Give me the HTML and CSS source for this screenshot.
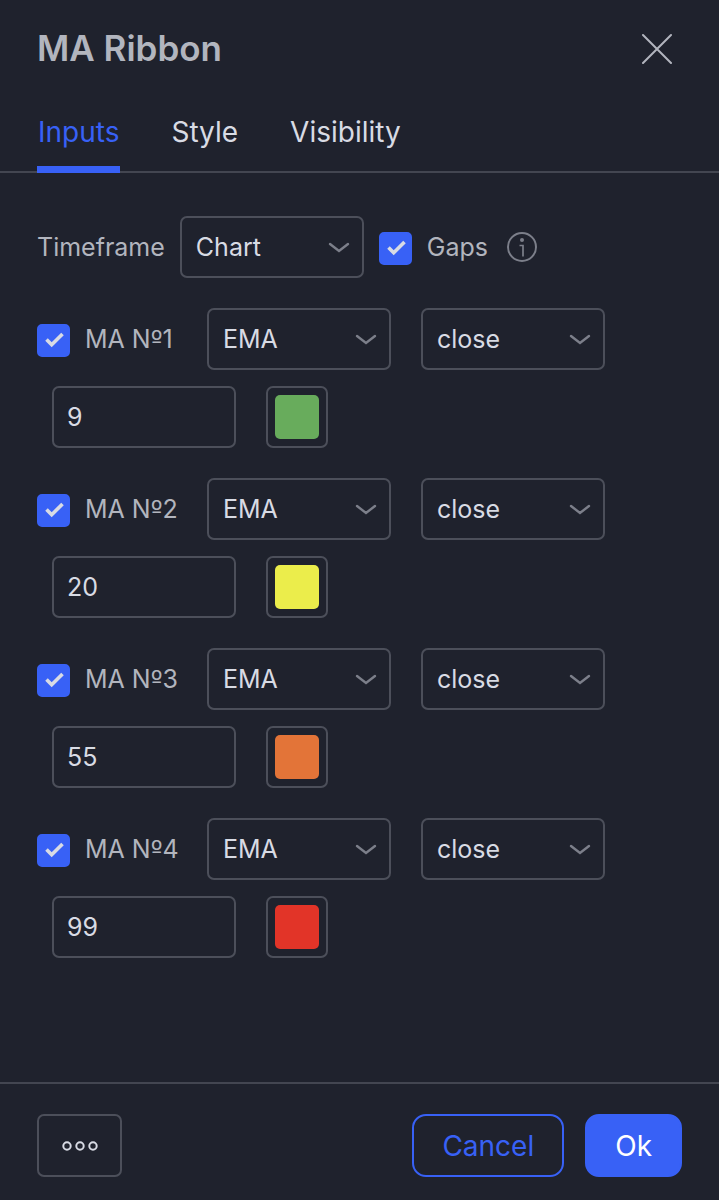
FILE: index.html
```html
<!DOCTYPE html>
<html lang="en">
<head>
  <meta charset="UTF-8">
  <meta name="viewport" content="width=device-width, initial-scale=1">
  <title>MA Ribbon</title>
  <link rel="stylesheet" href="styles.css">
</head>
<body>
  <!-- shared icons -->
  <svg class="sprite" aria-hidden="true">
    <symbol id="chevron" viewBox="0 0 22 12"><path d="M2 2l9 7 9-7" fill="none" stroke="currentColor" stroke-width="2.4" stroke-linecap="round"/></symbol>
    <symbol id="check" viewBox="0 0 33 33"><path d="M9.5 15.5l5.2 5.2 10.8-10.7" fill="none" stroke="currentColor" stroke-width="3.6"/></symbol>
  </svg>

  <form class="dialog">
    <header class="header">
      <h1 class="title">MA Ribbon</h1>
      <button class="close" type="button" aria-label="Close">
        <svg width="32" height="32" viewBox="0 0 32 32"><path d="M2 3l28 28M30 3L2 31" fill="none" stroke="currentColor" stroke-width="2" stroke-linecap="round"/></svg>
      </button>
    </header>

    <nav class="tabs">
      <button class="tab active" type="button">Inputs</button>
      <button class="tab" type="button">Style</button>
      <button class="tab" type="button">Visibility</button>
    </nav>

    <main class="content">
      <div class="timeframe">
        <label for="timeframe">Timeframe</label>
        <div class="select">
          <select id="timeframe"><option>Chart</option></select>
          <svg><use href="#chevron"/></svg>
        </div>
        <label class="check">
          <span class="box"><input type="checkbox" checked><svg><use href="#check"/></svg></span>
          Gaps
        </label>
        <button class="info" type="button" aria-label="About gaps">
          <svg width="30" height="30" viewBox="0 0 30 30"><circle cx="15" cy="15" r="14" fill="none" stroke="currentColor" stroke-width="2"/><circle cx="15" cy="8" r="2" fill="currentColor"/><path d="M12.500 13.500h3.500v11" fill="none" stroke="currentColor" stroke-width="1.700"/></svg>
        </button>
      </div>

      <section class="ma">
        <div class="ma-row">
          <label class="check">
            <span class="box"><input type="checkbox" checked><svg><use href="#check"/></svg></span>
            <span>MA N<span class="ordinal">º</span>1</span>
          </label>
          <div class="select">
            <select aria-label="MA Nº1 type"><option>EMA</option></select>
            <svg><use href="#chevron"/></svg>
          </div>
          <div class="select">
            <select aria-label="MA Nº1 source"><option>close</option></select>
            <svg><use href="#chevron"/></svg>
          </div>
        </div>
        <div class="ma-row indent">
          <input class="length" type="text" inputmode="numeric" value="9" aria-label="MA Nº1 length">
          <input class="color" type="color" value="#68ac5c" aria-label="MA Nº1 color">
        </div>
      </section>

      <section class="ma">
        <div class="ma-row">
          <label class="check">
            <span class="box"><input type="checkbox" checked><svg><use href="#check"/></svg></span>
            <span>MA N<span class="ordinal">º</span>2</span>
          </label>
          <div class="select">
            <select aria-label="MA Nº2 type"><option>EMA</option></select>
            <svg><use href="#chevron"/></svg>
          </div>
          <div class="select">
            <select aria-label="MA Nº2 source"><option>close</option></select>
            <svg><use href="#chevron"/></svg>
          </div>
        </div>
        <div class="ma-row indent">
          <input class="length" type="text" inputmode="numeric" value="20" aria-label="MA Nº2 length">
          <input class="color" type="color" value="#ebed4b" aria-label="MA Nº2 color">
        </div>
      </section>

      <section class="ma">
        <div class="ma-row">
          <label class="check">
            <span class="box"><input type="checkbox" checked><svg><use href="#check"/></svg></span>
            <span>MA N<span class="ordinal">º</span>3</span>
          </label>
          <div class="select">
            <select aria-label="MA Nº3 type"><option>EMA</option></select>
            <svg><use href="#chevron"/></svg>
          </div>
          <div class="select">
            <select aria-label="MA Nº3 source"><option>close</option></select>
            <svg><use href="#chevron"/></svg>
          </div>
        </div>
        <div class="ma-row indent">
          <input class="length" type="text" inputmode="numeric" value="55" aria-label="MA Nº3 length">
          <input class="color" type="color" value="#e37438" aria-label="MA Nº3 color">
        </div>
      </section>

      <section class="ma">
        <div class="ma-row">
          <label class="check">
            <span class="box"><input type="checkbox" checked><svg><use href="#check"/></svg></span>
            <span>MA N<span class="ordinal">º</span>4</span>
          </label>
          <div class="select">
            <select aria-label="MA Nº4 type"><option>EMA</option></select>
            <svg><use href="#chevron"/></svg>
          </div>
          <div class="select">
            <select aria-label="MA Nº4 source"><option>close</option></select>
            <svg><use href="#chevron"/></svg>
          </div>
        </div>
        <div class="ma-row indent">
          <input class="length" type="text" inputmode="numeric" value="99" aria-label="MA Nº4 length">
          <input class="color" type="color" value="#e23428" aria-label="MA Nº4 color">
        </div>
      </section>
    </main>

    <footer class="footer">
      <button class="btn more" type="button" aria-label="More">
        <svg width="36" height="10" viewBox="0 0 36 10" fill="none" stroke="currentColor" stroke-width="2"><circle cx="5" cy="5" r="3.7"/><circle cx="18" cy="5" r="3.7"/><circle cx="31" cy="5" r="3.7"/></svg>
      </button>
      <button class="btn cancel" type="button">Cancel</button>
      <button class="btn ok" type="submit">Ok</button>
    </footer>
  </form>
</body>
</html>
```

FILE: styles.css
```css
* {
  box-sizing: border-box;
}
body {
  margin: 0;
  background-color: #1f222d;
  color: #b2b5be;
  font-family: Inter, "Liberation Sans", sans-serif;
  font-size: 25px;
  line-height: 30px;
}
button, input, select {
  margin: 0;
  font: inherit;
  color: inherit;
}
button {
  padding: 0;
  border: none;
  background: none;
  cursor: pointer;
}
svg {
  display: block;
}
.sprite {
  position: absolute;
  width: 0;
  height: 0;
}
.dialog {
  display: flex;
  flex-direction: column;
  min-height: 100vh;
}

/* header */
.header {
  display: flex;
  align-items: center;
  justify-content: space-between;
  padding: 26px 46px 26px 37px;
}
.title {
  margin: 0;
  font-size: 35px;
  font-weight: 600;
  line-height: 44px;
}
.tabs {
  display: flex;
  gap: 50px;
  padding: 0 37px;
  border-bottom: 2px solid #434651;
}
.tab {
  height: 77px;
  margin-bottom: -2px;
  padding: 2px 1px 0;
  border-bottom: 7px solid transparent;
  color: #d8dbe4;
  font-size: 28px;
}
.tab.active {
  color: #3861f6;
  border-color: #3861f6;
}

/* inputs */
.content {
  flex: 1;
  padding: 43px 37px 30px;
}
.timeframe {
  display: flex;
  align-items: center;
  gap: 15px;
}
.select {
  position: relative;
}
.select select {
  appearance: none;
  display: block;
  width: 184px;
  height: 62px;
  padding: 0 44px 0 14px;
  border: 2px solid #4c4f5a;
  border-radius: 7px;
  background: transparent;
  color: #d8dbe4;
}
.select svg {
  position: absolute;
  top: 26px;
  right: 14px;
  width: 22px;
  height: 12px;
  color: #7c7f8a;
  pointer-events: none;
}
.check {
  display: flex;
  align-items: center;
  gap: 15px;
  white-space: nowrap;
}
.box {
  position: relative;
  width: 33px;
  height: 33px;
  margin-top: 2px;
}
.box input {
  appearance: none;
  display: block;
  width: 33px;
  height: 33px;
  border: 2px solid #4c4f5a;
  border-radius: 5px;
}
.box input:checked {
  border-color: #3861f6;
  background-color: #3861f6;
}
.box svg {
  position: absolute;
  inset: 0;
  width: 33px;
  height: 33px;
  color: #d8dbe4;
  pointer-events: none;
}
.box input:not(:checked) + svg {
  display: none;
}
/* Inter has no bar under the ordinal sign */
.ordinal {
  font-family: "DejaVu Sans", sans-serif;
  line-height: 1;
}
.info {
  margin-left: 4px;
  color: #7c7f8a;
}
.ma {
  display: flex;
  flex-direction: column;
  gap: 16px;
  margin-top: 30px;
}
.ma-row {
  display: flex;
  gap: 30px;
}
.ma-row .check {
  width: 140px;
}
.indent {
  padding-left: 15px;
}
.length {
  width: 184px;
  height: 62px;
  padding: 0 13px;
  border: 2px solid #4c4f5a;
  border-radius: 7px;
  background: transparent;
  color: #d8dbe4;
}
.color {
  appearance: none;
  width: 62px;
  height: 62px;
  padding: 7px;
  border: 2px solid #4c4f5a;
  border-radius: 7px;
  background: transparent;
}
.color::-webkit-color-swatch-wrapper {
  padding: 0;
}
.color::-webkit-color-swatch {
  border: none;
  border-radius: 5px;
}

/* footer */
.footer {
  display: flex;
  gap: 21px;
  padding: 30px 37px 23px;
  border-top: 2px solid #434651;
}
.btn {
  display: flex;
  align-items: center;
  justify-content: center;
  height: 63px;
  padding: 0 28px;
  border: 2px solid #3861f6;
  border-radius: 14px;
  font-size: 28px;
}
.more {
  width: 85px;
  margin-right: auto;
  padding: 0;
  border-color: #4c4f5a;
  border-radius: 7px;
  color: #d8dbe4;
}
.cancel {
  color: #3861f6;
}
.ok {
  background-color: #3861f6;
  color: #fff;
}
```
